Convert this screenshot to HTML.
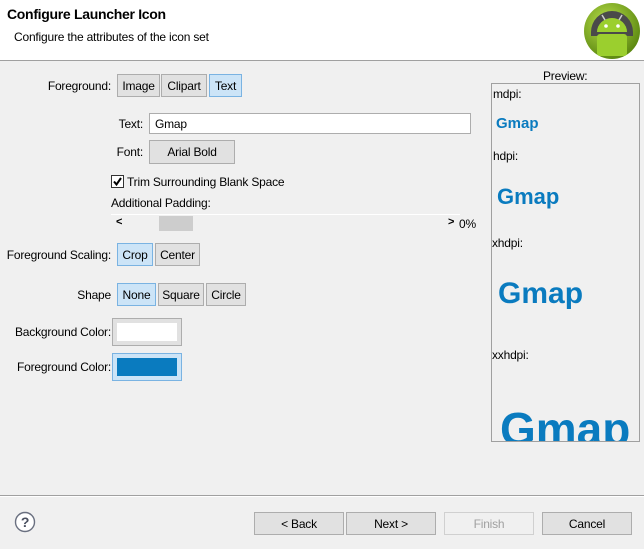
<!DOCTYPE html>
<html><head><meta charset="utf-8"><style>
*{box-sizing:border-box;margin:0;padding:0}
body{width:644px;height:549px;position:relative;background:#f0f0f0;font-family:"Liberation Sans",sans-serif;font-size:12px;color:#000;overflow:hidden;letter-spacing:-0.2px}
.a{position:absolute;white-space:nowrap}
.hdr{left:0;top:0;width:644px;height:61px;background:#fff;border-bottom:1px solid #a0a0a0}
.btn{position:absolute;border:1px solid #adadad;background:#e1e1e1;text-align:center;line-height:23px;height:23px;font-size:12px}
.sel{background:#cce4f7;border-color:#7ab3e2}
.lbl{position:absolute;text-align:right;white-space:nowrap}
.g{position:absolute;color:#0a7bbf;font-weight:bold;white-space:nowrap;letter-spacing:0}
</style></head><body>
<div class="a hdr"></div>
<div class="a" style="left:7px;top:6px;font-weight:bold;font-size:14px;letter-spacing:-0.3px">Configure Launcher Icon</div>
<div class="a" style="left:14px;top:30px">Configure the attributes of the icon set</div>
<svg class="a" style="left:583px;top:2px" width="58" height="58" viewBox="0 0 58 58">
<defs><radialGradient id="r" cx="40%" cy="35%" r="65%"><stop offset="0" stop-color="#b9e04a"/><stop offset="1" stop-color="#5e8a12"/></radialGradient></defs>
<circle cx="29" cy="29" r="28" fill="url(#r)"/>
<path d="M8 30 A21 21 0 0 1 50 30 L50 34 L8 34Z" fill="#4a4a4a"/>
<path d="M14 30 A15 14 0 0 1 44 30Z" fill="#9bcf2e"/>
<rect x="14" y="32" width="30" height="22" rx="3" fill="#9bcf2e"/>
<circle cx="23" cy="24" r="1.8" fill="#fff"/><circle cx="35" cy="24" r="1.8" fill="#fff"/>
<line x1="19" y1="13" x2="22" y2="18" stroke="#ccc" stroke-width="1.5"/><line x1="39" y1="13" x2="36" y2="18" stroke="#ccc" stroke-width="1.5"/>
</svg>

<div class="lbl" style="right:533px;top:79px">Foreground:</div>
<div class="btn" style="left:117px;top:74px;width:43px">Image</div>
<div class="btn" style="left:161px;top:74px;width:46px">Clipart</div>
<div class="btn sel" style="left:209px;top:74px;width:33px">Text</div>

<div class="lbl" style="right:501px;top:117px">Text:</div>
<div class="a" style="left:149px;top:113px;width:322px;height:21px;background:#fff;border:1px solid #adadad;padding:3px 0 0 5px">Gmap</div>
<div class="lbl" style="right:501px;top:145px">Font:</div>
<div class="btn" style="left:149px;top:140px;width:86px;height:24px;line-height:23px">Arial Bold</div>

<div class="a" style="left:111px;top:175px;width:13px;height:13px;background:#fff;border:1px solid #333"></div>
<svg class="a" style="left:112px;top:176px" width="11" height="11"><path d="M2 5.5 L4.5 8.5 L9 2" stroke="#000" stroke-width="2" fill="none"/></svg>
<div class="a" style="left:127px;top:175px">Trim Surrounding Blank Space</div>
<div class="a" style="left:111px;top:196px">Additional Padding:</div>
<div class="a" style="left:111px;top:214px;width:349px;height:1px;background:#fff"></div>
<div class="a" style="left:116px;top:216px;font-weight:bold;font-size:11px">&lt;</div>
<div class="a" style="left:159px;top:216px;width:34px;height:15px;background:#cdcdcd"></div>
<div class="a" style="left:448px;top:216px;font-weight:bold;font-size:11px">&gt;</div>
<div class="a" style="left:459px;top:217px">0%</div>

<div class="lbl" style="right:533px;top:248px">Foreground Scaling:</div>
<div class="btn sel" style="left:117px;top:243px;width:36px">Crop</div>
<div class="btn" style="left:155px;top:243px;width:45px">Center</div>

<div class="lbl" style="right:533px;top:288px">Shape</div>
<div class="btn sel" style="left:117px;top:283px;width:39px">None</div>
<div class="btn" style="left:158px;top:283px;width:46px">Square</div>
<div class="btn" style="left:206px;top:283px;width:40px">Circle</div>

<div class="lbl" style="right:533px;top:325px">Background Color:</div>
<div class="a" style="left:112px;top:318px;width:70px;height:28px;border:1px solid #adadad;background:#e1e1e1;padding:4px"><div style="width:100%;height:100%;background:#fff"></div></div>
<div class="lbl" style="right:533px;top:360px">Foreground Color:</div>
<div class="a" style="left:112px;top:353px;width:70px;height:28px;border:1px solid #7ab3e2;background:#cce4f7;padding:4px"><div style="width:100%;height:100%;background:#0a7bbf"></div></div>

<div class="a" style="left:543px;top:69px">Preview:</div>
<div class="a" style="left:491px;top:83px;width:149px;height:359px;border:1px solid #a0a0a0;overflow:hidden">
<div class="a" style="left:1px;top:3px">mdpi:</div>
<div class="g" style="left:4px;top:31px;font-size:15px">Gmap</div>
<div class="a" style="left:1px;top:65px">hdpi:</div>
<div class="g" style="left:5px;top:100px;font-size:22px">Gmap</div>
<div class="a" style="left:0px;top:152px">xhdpi:</div>
<div class="g" style="left:6px;top:193px;font-size:30px">Gmap</div>
<div class="a" style="left:0px;top:264px">xxhdpi:</div>
<div class="g" style="left:8px;top:318px;font-size:46px">Gmap</div>
</div>

<div class="a" style="left:0;top:495px;width:644px;height:1px;background:#a0a0a0"></div>
<div class="a" style="left:0;top:496px;width:644px;height:1px;background:#fff"></div>
<svg class="a" style="left:14px;top:511px" width="22" height="22"><circle cx="11" cy="11" r="9.5" fill="#fff" stroke="#6a7080" stroke-width="1.4"/><text x="11" y="16" text-anchor="middle" font-family="Liberation Sans" font-weight="bold" font-size="14" fill="#4a5060">?</text></svg>
<div class="btn" style="left:254px;top:512px;width:90px;height:23px">&lt; Back</div>
<div class="btn" style="left:346px;top:512px;width:90px;height:23px">Next &gt;</div>
<div class="btn" style="left:444px;top:512px;width:90px;height:23px;background:#f0f0f0;border-color:#d0d0d0;color:#a0a0a0">Finish</div>
<div class="btn" style="left:542px;top:512px;width:90px;height:23px">Cancel</div>
</body></html>
